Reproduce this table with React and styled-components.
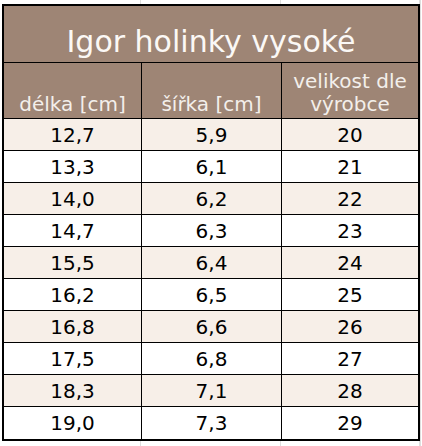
import React from "react";
import styled, { createGlobalStyle } from "styled-components";

const GlobalStyle = createGlobalStyle`
  html, body {
    margin: 0;
    padding: 0;
    background: #ffffff;
  }
  body {
    font-family: "DejaVu Sans", Verdana, sans-serif;
  }
`;

const Sheet = styled.div`
  width: 420px;
  height: 446px;
  border-right: 1px solid #dedede;
  display: flex;
  flex-direction: column;
`;

const GridStrip = styled.div`
  display: grid;
  grid-template-columns: 141px 140px 139px;
  height: ${(p) => p.$h}px;
  flex: ${(p) => (p.$grow ? 1 : "none")};
`;

const GridCell = styled.div`
  border-right: 1px solid #dedede;
`;

const Table = styled.div`
  margin-left: 2px;
  width: 418px;
  box-sizing: border-box;
  border: 2px solid #000;
`;

const TitleRow = styled.div`
  height: 57px;
  border-bottom: 1px solid #000;
  background: #9e8575;
  color: #fbf8f5;
  font-size: 30px;
  line-height: 34px;
  display: flex;
  align-items: flex-end;
  justify-content: center;
  padding-bottom: 3px;
  box-sizing: border-box;
`;

const Row = styled.div`
  display: grid;
  grid-template-columns: 138px 140px 136px;
  height: ${(p) => p.$h}px;
  box-sizing: border-box;
  border-bottom: ${(p) => (p.$last ? "none" : "1px solid #000")};
  background: ${(p) => p.$bg};
`;

const Cell = styled.div`
  border-right: ${(p) => (p.$end ? "none" : "1px solid #000")};
  display: flex;
  align-items: ${(p) => (p.$bottom ? "flex-end" : "center")};
  justify-content: center;
  text-align: center;
  font-size: 20px;
  line-height: ${(p) => (p.$bottom ? 23 : 24)}px;
  color: ${(p) => p.$color || "#000"};
  padding-bottom: ${(p) => (p.$bottom ? 2 : 0)}px;
  box-sizing: border-box;
`;

const data = [
  ["12,7", "5,9", "20"],
  ["13,3", "6,1", "21"],
  ["14,0", "6,2", "22"],
  ["14,7", "6,3", "23"],
  ["15,5", "6,4", "24"],
  ["16,2", "6,5", "25"],
  ["16,8", "6,6", "26"],
  ["17,5", "6,8", "27"],
  ["18,3", "7,1", "28"],
  ["19,0", "7,3", "29"],
];

const headColor = "#f3efeb";

export default function App() {
  return (
    <>
      <GlobalStyle />
      <Sheet>
        <GridStrip $h={4}>
          <GridCell />
          <GridCell />
          <GridCell />
        </GridStrip>
        <Table>
          <TitleRow>Igor holinky vysoké</TitleRow>
          <Row $h={56} $bg="#9e8575">
            <Cell $bottom $color={headColor}>délka [cm]</Cell>
            <Cell $bottom $color={headColor}>šířka [cm]</Cell>
            <Cell $bottom $end $color={headColor}>
              velikost dle
              <br />
              výrobce
            </Cell>
          </Row>
          {data.map((r, i) => (
            <Row
              key={r[0]}
              $h={32}
              $last={i === data.length - 1}
              $bg={i % 2 === 0 ? "#f7efe8" : "#ffffff"}
            >
              <Cell>{r[0]}</Cell>
              <Cell>{r[1]}</Cell>
              <Cell $end>{r[2]}</Cell>
            </Row>
          ))}
        </Table>
        <GridStrip $grow>
          <GridCell />
          <GridCell />
          <GridCell />
        </GridStrip>
      </Sheet>
    </>
  );
}
